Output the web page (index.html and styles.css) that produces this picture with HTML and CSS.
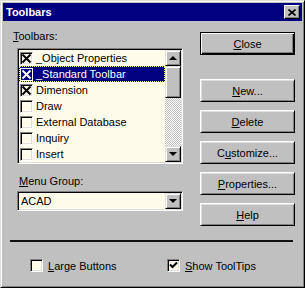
FILE: index.html
```html
<!DOCTYPE html>
<html lang="en">

<head>
	<meta charset="UTF-8">
	<meta name="viewport" content="width=device-width, initial-scale=1.0">
	<title>Toolbars</title>
	<link rel="stylesheet" href="styles.css">
</head>

<body>

	<div class="dialog">
		<div class="titlebar">
			<span class="title">Toolbars</span>
			<span class="title-close">
				<svg width="8" height="7" viewBox="0 0 8 7"><path d="M0.5 0.5 L7.5 6.5 M7.5 0.5 L0.5 6.5" stroke="#000" stroke-width="1.6" fill="none"/></svg>
			</span>
		</div>

		<div class="content">
			<div class="main">
				<div class="left-col">
					<div class="field-label"><u>T</u>oolbars:</div>
					<div class="listbox">
						<ul class="items">
							<li class="item"><span class="check checked"></span>_Object Properties</li>
							<li class="item selected"><span class="check checked"></span>_Standard Toolbar</li>
							<li class="item"><span class="check checked"></span>Dimension</li>
							<li class="item"><span class="check"></span>Draw</li>
							<li class="item"><span class="check"></span>External Database</li>
							<li class="item"><span class="check"></span>Inquiry</li>
							<li class="item"><span class="check"></span>Insert</li>
						</ul>
						<div class="scrollbar">
							<span class="sb-btn"><span class="arrow-up"></span></span>
							<span class="sb-thumb"></span>
							<span class="sb-track"></span>
							<span class="sb-btn"><span class="arrow-down"></span></span>
						</div>
					</div>

					<div class="field-label group-label"><u>M</u>enu Group:</div>
					<div class="combo">
						<span class="combo-text">ACAD</span>
						<span class="sb-btn"><span class="arrow-down"></span></span>
					</div>
				</div>

				<div class="buttons">
					<button class="btn default"><u>C</u>lose</button>
					<button class="btn first"><u>N</u>ew...</button>
					<button class="btn"><u>D</u>elete</button>
					<button class="btn">C<u>u</u>stomize...</button>
					<button class="btn"><u>P</u>roperties...</button>
					<button class="btn"><u>H</u>elp</button>
				</div>
			</div>

			<div class="separator"></div>

			<div class="options">
				<div class="option large"><span class="check"></span><span><u>L</u>arge Buttons</span></div>
				<div class="option"><span class="check ticked"></span><span><u>S</u>how ToolTips</span></div>
			</div>
		</div>
	</div>

</body>

</html>
```

FILE: styles.css
```css
/* Basic reset and styling */
* {
	margin: 0;
	padding: 0;
	box-sizing: border-box;
}

body {
	width: 305px;
	height: 288px;
	overflow: hidden;
	background-color: #c0c0c0;
	font-family: "Liberation Sans", Arial, sans-serif;
	font-size: 11px;
	color: #000;
}

u {
	text-decoration-thickness: 1px;
	text-underline-offset: 1px;
}

/* window frame */
.dialog {
	width: 305px;
	height: 288px;
	display: flex;
	flex-direction: column;
	padding: 2px;
	background-color: #c0c0c0;
	border: 1px solid;
	border-color: #dfdfdf #000 #000 #dfdfdf;
	box-shadow: inset 1px 1px #fff, inset -1px -1px #808080;
}

.titlebar {
	height: 18px;
	display: flex;
	align-items: center;
	justify-content: space-between;
	padding: 0 2px 0 3px;
	background-color: #000080;
	color: #fff;
	font-weight: bold;
}

.title-close {
	width: 16px;
	height: 14px;
	display: flex;
	align-items: center;
	justify-content: center;
	background-color: #c0c0c0;
	border: 1px solid;
	border-color: #fff #000 #000 #fff;
	box-shadow: inset -1px -1px #808080;
}

.content {
	flex: 1;
	padding: 9px 7px 0 10px;
}

.main {
	display: flex;
	gap: 17px;
}

.left-col {
	width: 170px;
}

.field-label {
	line-height: 13px;
	height: 13px;
	margin-bottom: 5px;
}

.group-label {
	margin: 11px 0 3px 6px;
}

/* sunken controls */
.listbox,
.combo {
	margin-left: 4px;
	width: 166px;
	padding: 1px;
	background-color: #fffbea;
	border: 1px solid;
	border-color: #808080 #fff #fff #808080;
	box-shadow: inset 1px 1px #000, inset -1px -1px #dfdfdf;
	display: flex;
}

.listbox {
	height: 116px;
}

.items {
	list-style: none;
	flex: 1;
}

.item {
	height: 16px;
	display: flex;
	align-items: center;
	gap: 3px;
	padding-left: 1px;
	white-space: nowrap;
}

.item.selected {
	background-color: #000080;
	color: #fff;
	outline: 1px dotted #ffff90;
	outline-offset: -1px;
}

/* check boxes */
.check {
	width: 13px;
	height: 13px;
	flex-shrink: 0;
	background-color: #fffbea;
	border: 1px solid;
	border-color: #808080 #fff #fff #808080;
	box-shadow: inset 1px 1px #000, inset -1px -1px #dfdfdf;
	background-repeat: no-repeat;
	background-position: center;
}

.check.checked {
	background-image: url("data:image/svg+xml,%3Csvg xmlns='http://www.w3.org/2000/svg' width='11' height='11'%3E%3Cpath d='M1.5 1.5L9.5 9.5M9.5 1.5L1.5 9.5' stroke='%23000' stroke-width='2'/%3E%3C/svg%3E");
}

.selected .check {
	background-color: #000080;
	border-color: #fff;
	box-shadow: none;
	background-image: url("data:image/svg+xml,%3Csvg xmlns='http://www.w3.org/2000/svg' width='11' height='11'%3E%3Cpath d='M1.5 1.5L9.5 9.5M9.5 1.5L1.5 9.5' stroke='%23fff' stroke-width='2'/%3E%3C/svg%3E");
}

.check.ticked {
	background-image: url("data:image/svg+xml,%3Csvg xmlns='http://www.w3.org/2000/svg' width='11' height='11'%3E%3Cpath d='M2 4.5L4.5 7L9 2.5' stroke='%23000' stroke-width='2' fill='none'/%3E%3C/svg%3E");
}

/* scroll bar */
.scrollbar {
	width: 16px;
	display: flex;
	flex-direction: column;
}

.sb-btn,
.sb-thumb {
	width: 16px;
	height: 16px;
	flex-shrink: 0;
	display: flex;
	align-items: center;
	justify-content: center;
	background-color: #c0c0c0;
	border: 1px solid;
	border-color: #dfdfdf #000 #000 #dfdfdf;
	box-shadow: inset 1px 1px #fff, inset -1px -1px #808080;
}

.sb-thumb {
	height: 32px;
}

.sb-track {
	flex: 1;
	background: repeating-conic-gradient(#c0c0c0 0 25%, #fff 0 50%) 0 0 / 2px 2px;
}

.arrow-up,
.arrow-down {
	width: 0;
	height: 0;
	border-left: 4px solid transparent;
	border-right: 4px solid transparent;
}

.arrow-up {
	border-bottom: 4px solid #000;
}

.arrow-down {
	border-top: 4px solid #000;
}

.combo {
	height: 20px;
	align-items: center;
}

.combo-text {
	flex: 1;
	padding-left: 2px;
}

/* push buttons */
.buttons {
	width: 95px;
	padding-top: 2px;
	display: flex;
	flex-direction: column;
	gap: 8px;
}

.btn {
	height: 23px;
	font-family: inherit;
	font-size: 11px;
	color: #000;
	background-color: #c0c0c0;
	border: 1px solid;
	border-color: #fff #000 #000 #fff;
	box-shadow: inset 1px 1px #dfdfdf, inset -1px -1px #808080;
}

.btn.default {
	border-color: #000;
	box-shadow: inset 1px 1px #fff, inset -1px -1px #000, inset -2px -2px #808080;
}

.btn.first {
	margin-top: 16px;
}

.separator {
	margin: 14px 0 0 -3px;
	width: 283px;
	height: 2px;
	background-color: #101010;
}

.options {
	margin-top: 17px;
	display: flex;
	align-items: center;
	padding-left: 17px;
}

.option {
	display: flex;
	align-items: center;
	gap: 5px;
	height: 13px;
}

.option.large {
	width: 137px;
}
```
